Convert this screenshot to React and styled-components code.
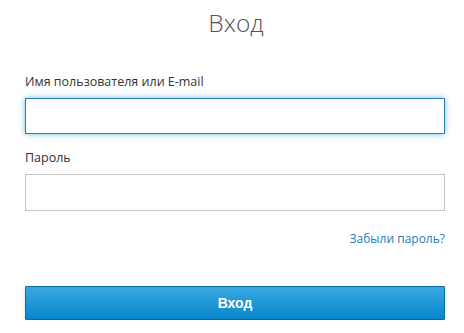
import React from "react";
import styled, { createGlobalStyle } from "styled-components";

const GlobalStyle = createGlobalStyle`
  html, body {
    margin: 0;
    padding: 0;
    background: #fff;
  }
  body {
    font-family: "Open Sans", "Liberation Sans", sans-serif;
  }
`;

const Form = styled.form`
  width: 420px;
  padding: 0 19px 0 25px;
  display: flex;
  flex-direction: column;
`;

const Title = styled.h1`
  margin: 5px 0 0;
  font-size: 24.5px;
  font-weight: 300;
  line-height: 36px;
  color: #555;
  text-align: center;
  padding-left: 2px;
`;

const Field = styled.div`
  display: flex;
  flex-direction: column;
  margin-top: ${p => p.$top}px;
`;

const Label = styled.label`
  font-size: 12.5px;
  line-height: 18px;
  color: #333;
  margin-bottom: 7px;
`;

const Input = styled.input`
  box-sizing: border-box;
  width: 100%;
  height: ${p => p.$h}px;
  border: 1px solid ${p => (p.$focused ? "#2a7fb0" : "#c4c4c4")};
  box-shadow: ${p => (p.$focused ? "0 0 6px rgba(64, 170, 230, 0.75)" : "none")};
  outline: none;
  background: #fff;
  font-family: inherit;
  font-size: 14px;
  padding: 0 8px;
`;

const Forgot = styled.a`
  align-self: flex-end;
  margin-top: 20px;
  font-size: 12px;
  line-height: 16px;
  color: #2a7ab3;
  text-decoration: none;
`;

const Button = styled.button`
  box-sizing: border-box;
  margin-top: 39px;
  width: 100%;
  height: 34px;
  border: 1px solid #0a6aa3;
  border-radius: 1px;
  background: linear-gradient(to bottom, #3aa8e2, #0886cb);
  box-shadow: 0 3px 4px rgba(0, 0, 0, 0.12);
  color: #fff;
  font-family: "Liberation Sans", Arial, sans-serif;
  font-weight: bold;
  font-size: 14px;
  cursor: pointer;
`;

export default function App() {
  return (
    <>
      <GlobalStyle />
      <Form onSubmit={e => e.preventDefault()}>
        <Title>Вход</Title>
        <Field $top={32}>
          <Label>Имя пользователя или E-mail</Label>
          <Input type="text" $focused $h={36} />
        </Field>
        <Field $top={15}>
          <Label>Пароль</Label>
          <Input type="password" $h={37} />
        </Field>
        <Forgot href="#">Забыли пароль?</Forgot>
        <Button type="submit">Вход</Button>
      </Form>
    </>
  );
}
